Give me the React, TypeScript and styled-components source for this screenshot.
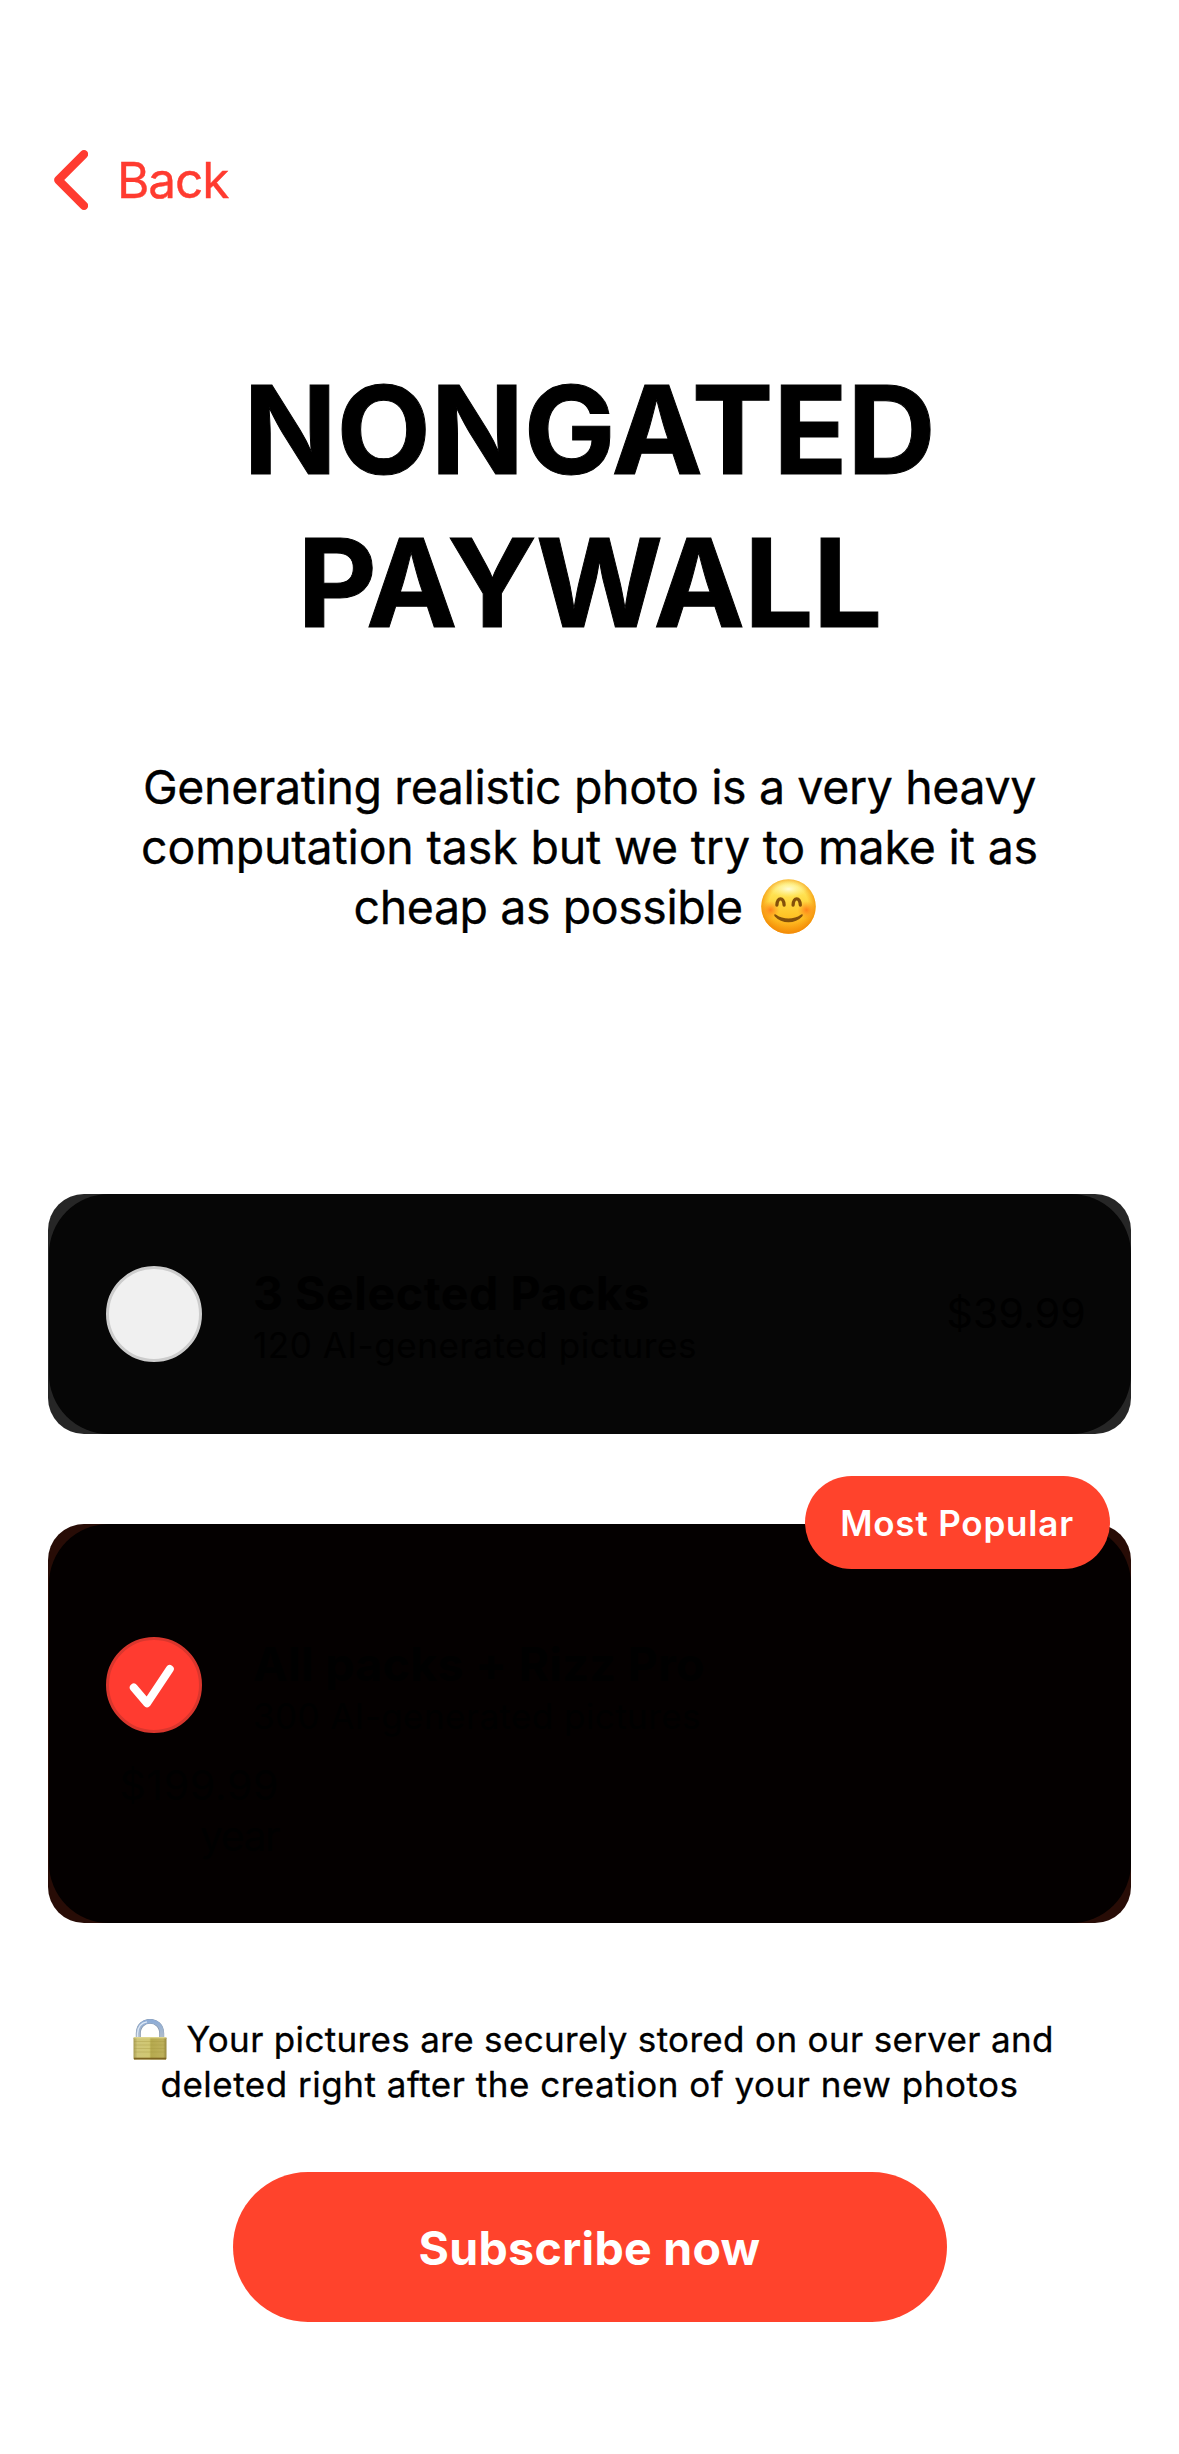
import React from "react";
import styled, { createGlobalStyle } from "styled-components";

const GlobalStyle = createGlobalStyle`
  * { box-sizing: border-box; }
  body {
    margin: 0;
    background: #fff;
    color: #000;
    font-family: Inter, "Liberation Sans", sans-serif;
  }
`;

const Screen = styled.main`
  display: flex;
  flex-direction: column;
  width: 1179px;
  height: 2454px;
  padding: 150px 48px 0;
  overflow: hidden;
`;

const BackButton = styled.a`
  display: flex;
  align-items: center;
  align-self: flex-start;
  gap: 29px;
  height: 60px;
  margin-left: 6px;
  color: #ff3b30;
  font-size: 49.5px;
  line-height: 60px;
  letter-spacing: -1.1px;
  -webkit-text-stroke: 0.4px;
`;

const Title = styled.h1`
  margin: 143px 0 0;
  font-size: 122.5px;
  font-weight: 700;
  line-height: 153px;
  text-align: center;
  -webkit-text-stroke: 1px #000;
`;

const Line = styled.span<{ $spacing: number }>`
  display: block;
  letter-spacing: ${(p) => p.$spacing}px;
  white-space: nowrap;
`;

const Description = styled.p`
  margin: 98px 0 0;
  font-size: 46.5px;
  line-height: 60px;
  text-align: center;
  -webkit-text-stroke: 0.3px #000;
`;

const SmileIcon = styled.svg`
  width: 55px;
  height: 55px;
  margin: 0 9px 0 6px;
  vertical-align: -10px;
`;

const LockIcon = styled.svg`
  width: 34px;
  height: 41px;
  margin: -5px 9px 0 8px;
  vertical-align: -8px;
`;

const Plans = styled.section`
  display: flex;
  flex-direction: column;
  gap: 90px;
  margin-top: 257px;
`;

const PlanCard = styled.article<{ $edge: string; $fill: string; $height: number; $top: number }>`
  position: relative;
  isolation: isolate;
  height: ${(p) => p.$height}px;
  padding: ${(p) => p.$top}px 45px 0 57px;
  border-radius: 36px;
  background: ${(p) => p.$edge};

  &::before {
    content: "";
    position: absolute;
    inset: 0 0.5px;
    z-index: -1;
    border-radius: 60px;
    background: ${(p) => p.$fill};
  }
`;

const PlanRow = styled.div`
  display: flex;
  align-items: flex-start;
`;

const Radio = styled.span<{ $checked?: boolean }>`
  display: flex;
  flex: none;
  width: 96px;
  height: 96px;
  margin: 1px 51.5px 0 0.5px;
  border: 3px solid ${(p) => (p.$checked ? "#d9362d" : "#cccccc")};
  border-radius: 50%;
  background: ${(p) => (p.$checked ? "#ff3b30" : "#f0f0f0")};

  svg {
    margin: -3px;
    flex: none;
  }
`;

const PlanText = styled.div`
  flex: 1;
`;

const PlanName = styled.h2<{ $spacing: number }>`
  margin: 0;
  font-size: 46.5px;
  font-weight: 700;
  line-height: 56px;
  letter-spacing: ${(p) => p.$spacing}px;
`;

const PlanDetail = styled.p<{ $spacing: number }>`
  margin: 1.5px 0 0;
  font-size: 35px;
  line-height: 44px;
  letter-spacing: ${(p) => p.$spacing}px;
`;

const Price = styled.div`
  margin-top: 23px;
  font-size: 41px;
  line-height: 50px;
  letter-spacing: 0.2px;
`;

const YearlyPrice = styled.div`
  width: 174px;
  margin-top: 22px;
  font-size: 41px;
  line-height: 51px;
  text-align: right;
`;

const Badge = styled.span`
  position: absolute;
  top: -48px;
  right: 21.5px;
  display: flex;
  align-items: center;
  justify-content: center;
  width: 305px;
  height: 93px;
  padding-top: 1px;
  border-radius: 46.5px;
  background: #ff432c;
  color: #fff;
  font-size: 35px;
  font-weight: 600;
  letter-spacing: 0.8px;
`;

const SecurityNote = styled.p`
  margin: 94px 0 0;
  font-size: 35px;
  line-height: 45px;
  text-align: center;
  -webkit-text-stroke: 0.3px #000;
`;

const SubscribeButton = styled.button`
  align-self: center;
  width: 714px;
  height: 150px;
  margin-top: 65px;
  padding: 1px 0 0;
  border: 0;
  border-radius: 75px;
  background: #ff432c;
  color: #fff;
  font: 700 46.5px Inter, "Liberation Sans", sans-serif;
  letter-spacing: 0.26px;
`;

function Smile() {
  return (
    <SmileIcon viewBox="0 0 55 55" aria-label="smiling face">
      <defs>
        <linearGradient id="face" x1="0" y1="0" x2="0" y2="1">
          <stop offset="0" stopColor="#fff48a" />
          <stop offset="0.3" stopColor="#ffe04e" />
          <stop offset="0.65" stopColor="#ffc628" />
          <stop offset="1" stopColor="#fb9f12" />
        </linearGradient>
        <radialGradient id="rim" cx="0.5" cy="0.46" r="0.54">
          <stop offset="0.66" stopColor="#f79a0c" stopOpacity="0" />
          <stop offset="1" stopColor="#f28a08" stopOpacity="1" />
        </radialGradient>
        <radialGradient id="shine" cx="0.5" cy="0.5" r="0.5">
          <stop offset="0" stopColor="#fffde0" stopOpacity="0.95" />
          <stop offset="1" stopColor="#fff58c" stopOpacity="0" />
        </radialGradient>
        <radialGradient id="blush" cx="0.5" cy="0.5" r="0.5">
          <stop offset="0" stopColor="#ff7416" stopOpacity="0.85" />
          <stop offset="1" stopColor="#ff8a1c" stopOpacity="0" />
        </radialGradient>
      </defs>
      <circle cx="27.5" cy="27.5" r="27.2" fill="url(#face)" />
      <circle cx="27.5" cy="27.5" r="27.2" fill="url(#rim)" />
      <ellipse cx="27.5" cy="10" rx="19" ry="8.5" fill="url(#shine)" />
      <circle cx="9.5" cy="31" r="9" fill="url(#blush)" />
      <circle cx="45.5" cy="31" r="9" fill="url(#blush)" />
      <path d="M15.9 26c.6-8.2 6.6-8.2 7.2 0M32.1 26c.6-8.2 6.6-8.2 7.2 0" fill="none" stroke="#84500a" strokeWidth="3.3" strokeLinecap="round" />
      <path d="M13.4 35.6c.5-.6 1.2-.4 1.8.1 6.800 5 17.800 5 24.600 0 .6-.5 1.300-.7 1.800-.1.4.6.1 1.200-.4 1.800-6.600 7.700-20.800 7.700-27.400 0-.5-.6-.8-1.200-.4-1.800z" fill="#84500a" />
    </SmileIcon>
  );
}

function Lock() {
  return (
    <LockIcon viewBox="0 0 34 41" aria-label="locked">
      <defs>
        <linearGradient id="brass" x1="0" x2="1" y1="0" y2="0">
          <stop offset="0" stopColor="#a89c52" />
          <stop offset="0.12" stopColor="#cfc678" />
          <stop offset="0.48" stopColor="#d0c772" />
          <stop offset="0.53" stopColor="#b5a94e" />
          <stop offset="0.9" stopColor="#bdb05a" />
          <stop offset="1" stopColor="#93853c" />
        </linearGradient>
        <linearGradient id="steel" x1="0" x2="0" y1="0" y2="1">
          <stop offset="0" stopColor="#8fadd6" />
          <stop offset="1" stopColor="#b5bfc9" />
        </linearGradient>
      </defs>
      <path d="M5.3 21V14.5C5.3-1.7 28.7-1.7 28.7 14.5V21" fill="none" stroke="#8797ad" strokeWidth="5" />
      <path d="M5.1 21V14.5C5.1-1.9 28.9-1.9 28.9 14.5V21" fill="none" stroke="url(#steel)" strokeWidth="4" />
      <path d="M4.6 20V14.5C4.8 7 9 3.6 14 2.8" fill="none" stroke="#dde8f5" strokeWidth="1.3" />
      <rect x="0.5" y="18" width="33" height="22.5" rx="1.2" fill="url(#brass)" />
      <path d="M1 22.5h32M1 26h32M1 29.5h32M1 33h32" stroke="#a2943f" strokeOpacity="0.35" strokeWidth="1" />
      <path d="M1 18.7h32" stroke="#e0d894" strokeWidth="1.2" />
      <path d="M1 39.6h32" stroke="#7c6321" strokeWidth="1.8" />
    </LockIcon>
  );
}

export default function App() {
  return (
    <>
      <GlobalStyle />
      <Screen>
        <BackButton>
          <svg width="34" height="60" viewBox="0 0 34 60" fill="none">
            <path d="M30 4.300L4.300 30L30 55.700" stroke="#ff3b30" strokeWidth="8.4" strokeLinecap="round" strokeLinejoin="round" />
          </svg>
          Back
        </BackButton>

        <Title>
          <Line $spacing={-0.3}>NONGATED</Line>
          <Line $spacing={-0.7}>PAYWALL</Line>
        </Title>

        <Description>
          <Line $spacing={-0.39}>Generating realistic photo is a very heavy</Line>
          <Line $spacing={-0.175}>computation task but we try to make it as</Line>
          <Line $spacing={-0.435}>cheap as possible <Smile /></Line>
        </Description>

        <Plans>
          <PlanCard $edge="#262626" $fill="#060606" $height={240} $top={71}>
            <PlanRow>
              <Radio />
              <PlanText>
                <PlanName $spacing={0.546}>3 Selected Packs</PlanName>
                <PlanDetail $spacing={0.59}>120 AI-generated pictures</PlanDetail>
              </PlanText>
              <Price>$39.99</Price>
            </PlanRow>
          </PlanCard>

          <PlanCard $edge="#280c06" $fill="#040000" $height={399} $top={112}>
            <Badge>Most Popular</Badge>
            <PlanRow>
              <Radio $checked>
                <svg width="96" height="96" viewBox="0 0 96 96" fill="none">
                  <path d="M27.800 50.600L41 66.200L63.800 32" stroke="#fff" strokeWidth="8" strokeLinecap="round" strokeLinejoin="round" />
                </svg>
              </Radio>
              <PlanText>
                <PlanName $spacing={0.316}>All packs + Rizz Pro</PlanName>
                <PlanDetail $spacing={0.42}>300 AI-generated pictures</PlanDetail>
              </PlanText>
            </PlanRow>
            <YearlyPrice>
              <Line $spacing={0.626}>$199.99</Line>
              <Line $spacing={-1.5}>year</Line>
            </YearlyPrice>
          </PlanCard>
        </Plans>

        <SecurityNote>
          <Line $spacing={0.337}><Lock /> Your pictures are securely stored on our server and</Line>
          <Line $spacing={0.51}>deleted right after the creation of your new photos</Line>
        </SecurityNote>

        <SubscribeButton>Subscribe now</SubscribeButton>
      </Screen>
    </>
  );
}
